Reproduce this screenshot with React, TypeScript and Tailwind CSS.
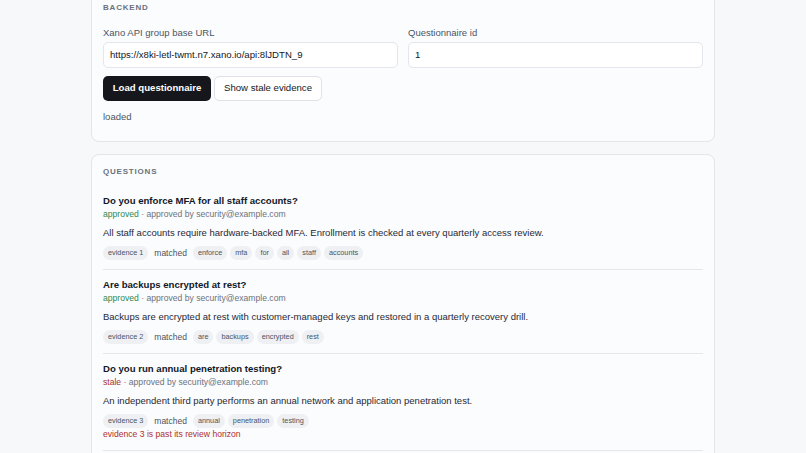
import React from "react";

type Question = {
  title: string;
  status: "approved" | "stale";
  answer: string;
  evidence: string;
  terms: string[];
  warning?: string;
};

const questions: Question[] = [
  {
    title: "Do you enforce MFA for all staff accounts?",
    status: "approved",
    answer:
      "All staff accounts require hardware-backed MFA. Enrollment is checked at every quarterly access review.",
    evidence: "evidence 1",
    terms: ["enforce", "mfa", "for", "all", "staff", "accounts"],
  },
  {
    title: "Are backups encrypted at rest?",
    status: "approved",
    answer:
      "Backups are encrypted at rest with customer-managed keys and restored in a quarterly recovery drill.",
    evidence: "evidence 2",
    terms: ["are", "backups", "encrypted", "rest"],
  },
  {
    title: "Do you run annual penetration testing?",
    status: "stale",
    answer:
      "An independent third party performs an annual network and application penetration test.",
    evidence: "evidence 3",
    terms: ["annual", "penetration", "testing"],
    warning: "evidence 3 is past its review horizon",
  },
];

const Chip = ({ children }: { children: React.ReactNode }) => (
  <span className="inline-flex items-center h-[14px] px-[5px] rounded-full bg-[#eef0f3] text-[7.3px] text-[#4b5563]">
    {children}
  </span>
);

const App = () => {
  return (
    <div
      className="w-full h-[453px] overflow-hidden bg-[#f7f8fa] text-[#111827]"
      style={{ fontFamily: '"Liberation Sans", Arial, sans-serif' }}
    >
      <div className="flex flex-col gap-[12px] w-[624px] -mt-[11px] ml-[91px]">
        {/* backend settings */}
        <div className="flex flex-col px-[11px] pt-[12px] pb-[18px] rounded-[8px] border border-[#e3e6ea] bg-[#fbfcfd]">
          <div className="text-[8px] font-bold tracking-[0.1em] text-[#6b7280] leading-[11px]">BACKEND</div>
          <div className="flex gap-[10px] mt-[14px]">
            <div className="flex flex-col flex-1 gap-[3px]">
              <label className="text-[9.5px] leading-[12px] text-[#4b5563]">Xano API group base URL</label>
              <div className="flex items-center h-[26px] px-[6px] rounded-[5px] border border-[#e3e6ea] bg-white text-[9.6px]">
                https://x8ki-letl-twmt.n7.xano.io/api:8lJDTN_9
              </div>
            </div>
            <div className="flex flex-col flex-1 gap-[3px]">
              <label className="text-[9.5px] leading-[12px] text-[#4b5563]">Questionnaire id</label>
              <div className="flex items-center h-[26px] px-[6px] rounded-[5px] border border-[#e3e6ea] bg-white text-[9.6px]">
                1
              </div>
            </div>
          </div>
          <div className="flex gap-[3px] mt-[8px]">
            <button className="h-[25px] w-[108px] rounded-[5px] bg-[#15171c] text-white text-[9.6px] font-bold">
              Load questionnaire
            </button>
            <button className="h-[25px] w-[108px] rounded-[5px] border border-[#dfe2e6] bg-white text-[#111827] text-[9.6px]">
              Show stale evidence
            </button>
          </div>
          <div className="mt-[10px] text-[9.5px] leading-[12px] text-[#4b5563]">loaded</div>
        </div>

        {/* questions list, continues below the fold */}
        <div className="flex flex-col px-[11px] pt-[11px] pb-[30px] rounded-[8px] border border-[#e3e6ea] bg-[#fbfcfd]">
          <div className="text-[8px] font-bold tracking-[0.1em] text-[#6b7280] leading-[11px]">QUESTIONS</div>
          <div className="flex flex-col mt-[9px]">
            {questions.map((q) => (
              <div key={q.title} className="flex flex-col pt-[8px] pb-[9px] border-b border-[#e5e7eb]">
                <div className="text-[9.6px] font-bold leading-[14px]">{q.title}</div>
                <div className="text-[8.6px] leading-[13px] text-[#6b7280]">
                  <span className={q.status === "approved" ? "text-[#2f8a4f]" : "text-[#ad2f2f]"}>{q.status}</span>
                  {" · approved by security@example.com"}
                </div>
                <div className="mt-[5px] text-[9.5px] leading-[13px] text-[#1f2937]">{q.answer}</div>
                <div className="flex items-center gap-[3px] mt-[7px]">
                  <Chip>{q.evidence}</Chip>
                  <span className="px-[3px] text-[8.5px] text-[#4b5563]">matched</span>
                  {q.terms.map((t) => (
                    <Chip key={t}>{t}</Chip>
                  ))}
                </div>
                {q.warning && (
                  <div className="text-[8.6px] leading-[13px] text-[#ad2f2f]">{q.warning}</div>
                )}
              </div>
            ))}
          </div>
        </div>
      </div>
    </div>
  );
};

export default App;
